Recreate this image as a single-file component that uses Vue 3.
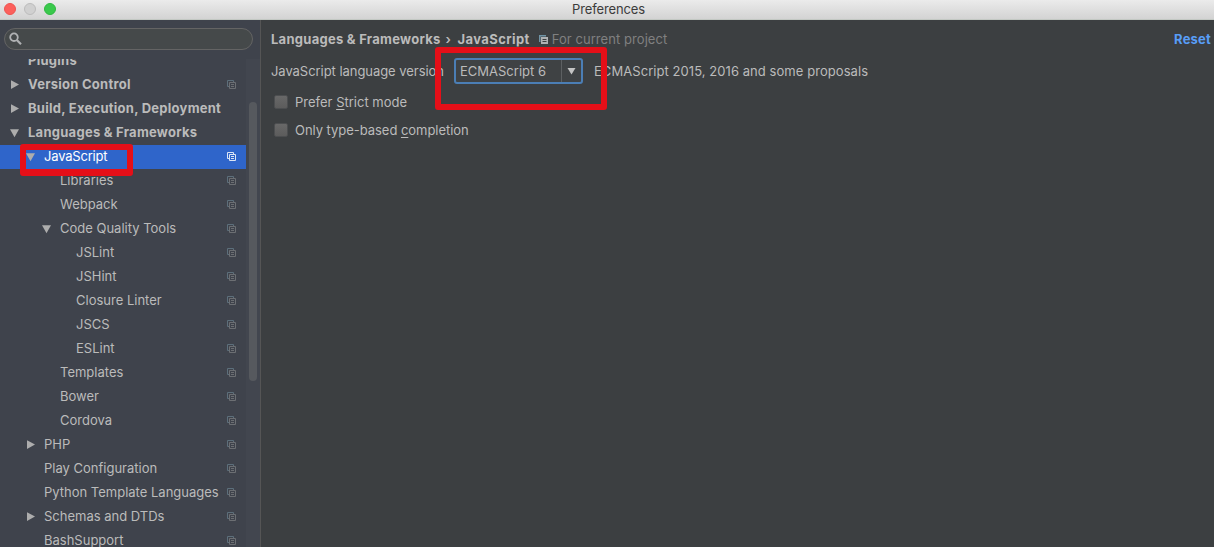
<script setup>
const rows = [
  { label: 'Plugins', depth: 0, bold: true },
  { label: 'Version Control', depth: 0, bold: true, arrow: 'right', project: true },
  { label: 'Build, Execution, Deployment', depth: 0, bold: true, arrow: 'right' },
  { label: 'Languages & Frameworks', depth: 0, bold: true, arrow: 'down' },
  { label: 'JavaScript', depth: 1, arrow: 'down', project: true, selected: true },
  { label: 'Libraries', depth: 2, project: true },
  { label: 'Webpack', depth: 2, project: true },
  { label: 'Code Quality Tools', depth: 2, arrow: 'down', project: true },
  { label: 'JSLint', depth: 3, project: true },
  { label: 'JSHint', depth: 3, project: true },
  { label: 'Closure Linter', depth: 3, project: true },
  { label: 'JSCS', depth: 3, project: true },
  { label: 'ESLint', depth: 3, project: true },
  { label: 'Templates', depth: 2, project: true },
  { label: 'Bower', depth: 2, project: true },
  { label: 'Cordova', depth: 2, project: true },
  { label: 'PHP', depth: 1, arrow: 'right', project: true },
  { label: 'Play Configuration', depth: 1, project: true },
  { label: 'Python Template Languages', depth: 1, project: true },
  { label: 'Schemas and DTDs', depth: 1, arrow: 'right', project: true },
  { label: 'BashSupport', depth: 1, project: true },
]
</script>

<template>
  <div class="window">
    <header class="titlebar">
      <div class="lights">
        <span class="light close"></span>
        <span class="light minimize"></span>
        <span class="light zoom"></span>
      </div>
      <span class="title">Preferences</span>
    </header>
    <div class="body">
      <aside class="sidebar">
        <div class="search">
          <svg width="14" height="14" viewBox="0 0 14 14">
            <circle cx="5" cy="5.2" r="3.8" fill="none" stroke="#afb1b3" stroke-width="1.8" />
            <path d="M7.8 8L12 12.2" stroke="#afb1b3" stroke-width="2.2" />
          </svg>
        </div>
        <div class="tree-area">
          <div class="tree">
            <div
              v-for="row in rows"
              :key="row.label"
              class="row"
              :class="['depth-' + row.depth, { bold: row.bold, selected: row.selected }]"
            >
              <span class="arrow">
                <svg v-if="row.arrow === 'right'" width="10" height="11" viewBox="0 0 10 11">
                  <path d="M1 1.2L9 5.6L1 10Z" fill="#adadad" />
                </svg>
                <svg v-else-if="row.arrow === 'down'" width="10" height="11" viewBox="0 0 10 11">
                  <path d="M0 2.2H9L4.5 10.2Z" fill="#adadad" />
                </svg>
              </span>
              <span class="label">{{ row.label }}</span>
              <svg v-if="row.project" class="project" width="9" height="9" viewBox="0 0 9 9" fill="none">
                <path class="back" d="M2 6.5H0.5V0.5H6.5V2" />
                <path class="front" d="M2.5 2.5H8.5V8.5H2.5ZM4 4.5H7M4 6.5H7" />
              </svg>
            </div>
          </div>
          <div class="scroll"><div class="thumb"></div></div>
        </div>
      </aside>
      <main class="content">
        <div class="heading">
          <span class="crumb first">Languages &amp; Frameworks</span>
          <span class="chevron">›</span>
          <span class="crumb">JavaScript</span>
          <svg class="scope-icon" width="9" height="9" viewBox="0 0 9 9">
            <path d="M0 0H7V1.5H1.5V7H0Z" fill="#6f93a5" />
            <path d="M2 2H9V9H2Z" fill="#afb1b3" />
            <path d="M3.5 4.5H7.5M3.5 6.5H7.5" stroke="#3c3f41" />
          </svg>
          <span class="scope">For current project</span>
          <a class="reset">Reset</a>
        </div>
        <div class="version">
          <span class="version-label">JavaScript language version</span>
          <div class="combo">
            <span class="value">ECMAScript 6</span>
            <span class="drop">
              <svg width="9" height="8" viewBox="0 0 9 8"><path d="M0.5 1H8.5L4.5 7.5Z" fill="#c4c4c4" /></svg>
            </span>
          </div>
          <span class="hint">ECMAScript 2015, 2016 and some proposals</span>
        </div>
        <div class="check strict">
          <span class="box"></span>
          <span>Prefer <u>S</u>trict mode</span>
        </div>
        <div class="check types">
          <span class="box"></span>
          <span>Only type-based <u>c</u>ompletion</span>
        </div>
      </main>
    </div>
    <div class="mark mark-tree"></div>
    <div class="mark mark-combo"></div>
  </div>
</template>

<style>
body {
  background: #3c3f41;
  overflow: hidden;
}
</style>

<style scoped>
.window {
  position: relative;
  display: flex;
  flex-direction: column;
  width: 1214px;
  height: 547px;
  overflow: hidden;
  font-family: Inter, "Liberation Sans", sans-serif;
  font-size: 13px;
  line-height: 16px;
  color: #bbbbbb;
  white-space: nowrap;
}
.titlebar {
  display: grid;
  grid-template-columns: 1fr auto 1fr;
  align-items: center;
  box-sizing: border-box;
  height: 20px;
  padding: 0 1px 2px 4px;
  background: linear-gradient(#ebebeb, #d3d3d3);
  border-bottom: 1px solid #c3c8c3;
  flex: none;
}
.lights {
  display: flex;
  gap: 8px;
}
.light {
  box-sizing: border-box;
  width: 12px;
  height: 12px;
  border-radius: 50%;
}
.close { background: #fc605c; border: 1px solid #ee5450; }
.minimize { background: #d0d0d0; border: 1px solid #bcbcbc; }
.zoom { background: #3ac94c; border: 1px solid #2fb841; }
.title {
  color: #3c3c3c;
  letter-spacing: -0.12px;
}
.body {
  display: flex;
  flex: 1;
  min-height: 0;
}
.sidebar {
  display: flex;
  flex-direction: column;
  box-sizing: border-box;
  width: 261px;
  background: #3f434c;
  border-right: 1px solid #555555;
  flex: none;
}
.search {
  display: flex;
  align-items: center;
  box-sizing: border-box;
  width: 249px;
  height: 22px;
  margin: 8px 0 0 4px;
  padding-left: 4px;
  background: #45494a;
  border: 1px solid #646464;
  border-radius: 11px;
  flex: none;
}
.tree-area {
  display: flex;
  flex: 1;
  min-height: 0;
  margin-top: 9px;
  overflow: hidden;
}
.tree {
  width: 246px;
  margin-top: -10px;
  flex: none;
}
.row {
  display: flex;
  align-items: center;
  box-sizing: border-box;
  height: 24px;
  padding-right: 10px;
  padding-bottom: 1px;
}
.depth-0 { padding-left: 10px; }
.depth-1 { padding-left: 26px; }
.depth-2 { padding-left: 42px; }
.depth-3 { padding-left: 58px; }
.arrow {
  display: flex;
  width: 18px;
  flex: none;
}
.label {
  flex: 1;
  padding-bottom: 1px;
}
.bold {
  font-weight: 700;
  letter-spacing: 0.26px;
}
.selected {
  color: #ffffff;
  background: #2f65ca;
  letter-spacing: -0.2px;
}
.project { flex: none; }
.back { stroke: #5d6f7b; }
.front { stroke: #6c6f73; }
.selected .back,
.selected .front { stroke: #dce5f5; }
.scroll {
  flex: 1;
  padding: 43px 3px 0;
  background: #42464f;
}
.thumb {
  width: 8px;
  height: 279px;
  background: #56595e;
  border-radius: 4px;
}
.content {
  flex: 1;
  min-width: 0;
  padding-left: 10px;
  background: #3c3f41;
}
.heading {
  display: flex;
  align-items: center;
  height: 16px;
  margin-top: 11px;
  padding-right: 3px;
}
.crumb {
  font-weight: 700;
  letter-spacing: 0.27px;
}
.crumb:not(.first) { letter-spacing: 0.4px; }
.chevron {
  width: 6px;
  margin: 0 6px 0 5px;
  font-weight: 600;
}
.scope-icon { margin: 1px 4px 0 9px; }
.scope {
  color: #808080;
  letter-spacing: 0.06px;
}
.reset {
  margin-left: auto;
  font-weight: 700;
  letter-spacing: 0.2px;
  color: #589df6;
}
.version {
  display: flex;
  align-items: center;
  height: 26px;
  margin-top: 11px;
}
.version-label {
  width: 183px;
  letter-spacing: -0.05px;
}
.combo {
  display: flex;
  box-sizing: border-box;
  width: 129px;
  height: 26px;
  border: 2px solid #4b7eb5;
  border-radius: 3px;
  background: #3f4244;
  flex: none;
}
.value {
  display: flex;
  align-items: center;
  width: 106px;
  box-sizing: border-box;
  padding-left: 4px;
  border-right: 1px solid #5d6062;
}
.drop {
  display: flex;
  flex: 1;
  align-items: center;
  justify-content: center;
}
.hint {
  margin-left: 11px;
  letter-spacing: 0.06px;
}
.check {
  display: flex;
  align-items: center;
  gap: 7px;
  height: 16px;
  padding-left: 3px;
}
.strict { margin-top: 10px; }
.types {
  margin-top: 12px;
  letter-spacing: -0.04px;
}
.box {
  box-sizing: border-box;
  width: 14px;
  height: 14px;
  background: linear-gradient(#686868, #5c5c5c);
  border: 1px solid #4c4e50;
  border-radius: 2px;
}
u { text-underline-offset: 2px; }
.mark {
  position: absolute;
  box-sizing: border-box;
  border: 6px solid #e50f18;
  border-radius: 3px;
}
.mark-tree {
  left: 20px;
  top: 144px;
  width: 113px;
  height: 32px;
  border-bottom-width: 7px;
}
.mark-combo {
  left: 435px;
  top: 47px;
  width: 172px;
  height: 63px;
}
</style>
